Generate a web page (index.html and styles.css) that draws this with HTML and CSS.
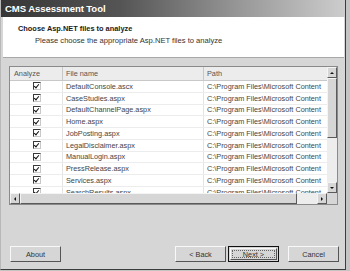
FILE: index.html
```html
<!DOCTYPE html>
<html lang="en">
<head>
  <meta charset="UTF-8">
  <title>CMS Assessment Tool</title>
  <link rel="stylesheet" href="styles.css">
</head>
<body>
  <div class="window">
    <div class="titlebar">CMS Assessment Tool</div>

    <div class="header">
      <div class="heading">Choose Asp.NET files to analyze</div>
      <div class="subheading">Please choose the appropriate Asp.NET files to analyze</div>
    </div>

    <div class="content">
      <div class="listview">
        <div class="lv-top">
          <div class="lv-table">
            <div class="lv-row lv-head">
              <div class="cell col-check">Analyze</div>
              <div class="cell col-name">File name</div>
              <div class="cell col-path">Path</div>
            </div>
            <div class="lv-row">
              <div class="cell col-check"><span class="checkbox"></span></div>
              <div class="cell col-name">DefaultConsole.ascx</div>
              <div class="cell col-path">C:\Program Files\Microsoft Content</div>
            </div>
            <div class="lv-row">
              <div class="cell col-check"><span class="checkbox"></span></div>
              <div class="cell col-name">CaseStudies.aspx</div>
              <div class="cell col-path">C:\Program Files\Microsoft Content</div>
            </div>
            <div class="lv-row">
              <div class="cell col-check"><span class="checkbox"></span></div>
              <div class="cell col-name">DefaultChannelPage.aspx</div>
              <div class="cell col-path">C:\Program Files\Microsoft Content</div>
            </div>
            <div class="lv-row">
              <div class="cell col-check"><span class="checkbox"></span></div>
              <div class="cell col-name">Home.aspx</div>
              <div class="cell col-path">C:\Program Files\Microsoft Content</div>
            </div>
            <div class="lv-row">
              <div class="cell col-check"><span class="checkbox"></span></div>
              <div class="cell col-name">JobPosting.aspx</div>
              <div class="cell col-path">C:\Program Files\Microsoft Content</div>
            </div>
            <div class="lv-row">
              <div class="cell col-check"><span class="checkbox"></span></div>
              <div class="cell col-name">LegalDisclaimer.aspx</div>
              <div class="cell col-path">C:\Program Files\Microsoft Content</div>
            </div>
            <div class="lv-row">
              <div class="cell col-check"><span class="checkbox"></span></div>
              <div class="cell col-name">ManualLogin.aspx</div>
              <div class="cell col-path">C:\Program Files\Microsoft Content</div>
            </div>
            <div class="lv-row">
              <div class="cell col-check"><span class="checkbox"></span></div>
              <div class="cell col-name">PressRelease.aspx</div>
              <div class="cell col-path">C:\Program Files\Microsoft Content</div>
            </div>
            <div class="lv-row">
              <div class="cell col-check"><span class="checkbox"></span></div>
              <div class="cell col-name">Services.aspx</div>
              <div class="cell col-path">C:\Program Files\Microsoft Content</div>
            </div>
            <div class="lv-row">
              <div class="cell col-check"><span class="checkbox"></span></div>
              <div class="cell col-name">SearchResults.aspx</div>
              <div class="cell col-path">C:\Program Files\Microsoft Content</div>
            </div>
          </div>

          <div class="vscroll">
            <div class="sb-btn"><span class="arrow-up"></span></div>
            <div class="sb-thumb-v"></div>
            <div class="sb-track"></div>
            <div class="sb-btn"><span class="arrow-down"></span></div>
          </div>
        </div>

        <div class="lv-bottom">
          <div class="hscroll">
            <div class="sb-btn"><span class="arrow-left"></span></div>
            <div class="sb-thumb-h"></div>
            <div class="sb-track"></div>
            <div class="sb-btn"><span class="arrow-right"></span></div>
          </div>
          <div class="sb-corner"></div>
        </div>
      </div>
    </div>

    <div class="footer">
      <button class="btn">About</button>
      <div class="spacer"></div>
      <button class="btn">&lt; Back</button>
      <button class="btn btn-default"><span>Next &gt;</span></button>
      <button class="btn btn-cancel">Cancel</button>
    </div>
  </div>
</body>
</html>
```

FILE: styles.css
```css
body {
  margin: 0;
  background-color: #c4c4c4;
  font-family: "Liberation Sans", Arial, sans-serif;
}
.window {
  width: 346px;
  height: 270px;
  box-sizing: border-box;
  background-color: #d6d6d6;
  border-left: 1px solid #b8b8b8;
  border-right: 1px solid #3c3c3c;
  border-bottom: 1px solid #3c3c3c;
  display: flex;
  flex-direction: column;
}
.titlebar {
  height: 17px;
  line-height: 17px;
  padding-left: 4px;
  color: white;
  font-size: 9.6px;
  font-weight: bold;
  letter-spacing: -0.1px;
  background: linear-gradient(to right, #363636 0%, #555 35%, #959595 68%, #cdcdcd 100%);
}
.header {
  height: 40px;
  margin: 0 1px 0 2px;
  background-color: white;
  border-bottom: 1px solid #a8a8a8;
}
.heading {
  font-size: 7.4px;
  font-weight: bold;
  color: #1a1a1a;
  padding: 7px 0 0 15px;
  line-height: 10px;
}
.subheading {
  font-size: 7.6px;
  color: #333;
  padding: 2px 0 0 32px;
  line-height: 10px;
}
.content {
  padding: 8px 0 0 8px;
}
.listview {
  width: 329px;
  height: 139px;
  box-sizing: border-box;
  border: 1px solid #8a8a8a;
  background-color: white;
  display: flex;
  flex-direction: column;
}
.lv-top {
  flex: 1;
  display: flex;
  overflow: hidden;
}
.lv-table {
  flex: 1;
  min-width: 0;
  overflow: hidden;
}
.lv-row {
  display: flex;
  height: 11.75px;
  box-sizing: border-box;
  border-bottom: 1px solid #ececec;
  font-size: 7.3px;
  color: #454545;
  white-space: nowrap;
}
.lv-head {
  height: 14px;
  background-color: #ececec;
  border-bottom: 1px solid #c8c8c8;
  color: #555;
}
.cell {
  display: flex;
  align-items: center;
  flex-shrink: 0;
  box-sizing: border-box;
  border-right: 1px solid #e4e4e4;
  padding-left: 3px;
  overflow: hidden;
}
.lv-head .cell {
  border-right: 1px solid #c8c8c8;
}
.col-check {
  width: 53px;
}
.lv-row .col-check {
  justify-content: center;
  padding-left: 0;
}
.lv-head .col-check {
  justify-content: flex-start;
  padding-left: 4px;
}
.col-name {
  width: 141px;
}
.col-path {
  width: 160px;
}
.checkbox {
  width: 8px;
  height: 8px;
  box-sizing: border-box;
  border: 1px solid #3a3a3a;
  border-right-color: #c8c8c8;
  border-bottom-color: #c8c8c8;
  background-color: white;
  position: relative;
  margin-left: 1px;
}
.checkbox::after {
  content: "";
  position: absolute;
  left: 1px;
  top: 0px;
  width: 2px;
  height: 4px;
  border-right: 1.5px solid #111;
  border-bottom: 1.5px solid #111;
  transform: rotate(40deg);
}
.vscroll {
  width: 10px;
  flex-shrink: 0;
  display: flex;
  flex-direction: column;
  background-color: #ededed;
}
.lv-bottom {
  height: 11px;
  display: flex;
}
.hscroll {
  flex: 1;
  display: flex;
  background-color: #ededed;
}
.sb-btn {
  width: 10px;
  height: 11px;
  box-sizing: border-box;
  background-color: #d6d6d6;
  border: 1px solid;
  border-color: #f4f4f4 #5a5a5a #5a5a5a #f4f4f4;
  display: flex;
  align-items: center;
  justify-content: center;
  flex-shrink: 0;
}
.sb-thumb-v {
  height: 60px;
  box-sizing: border-box;
  background-color: #d6d6d6;
  border: 1px solid;
  border-color: #f4f4f4 #5a5a5a #5a5a5a #f4f4f4;
}
.sb-thumb-h {
  width: 277px;
  box-sizing: border-box;
  background-color: #d6d6d6;
  border: 1px solid;
  border-color: #f4f4f4 #5a5a5a #5a5a5a #f4f4f4;
}
.sb-track {
  flex: 1;
}
.sb-corner {
  width: 10px;
  background-color: #d6d6d6;
}
.arrow-up, .arrow-down, .arrow-left, .arrow-right {
  width: 0;
  height: 0;
  border: 2.5px solid transparent;
}
.arrow-up {
  border-bottom-color: #111;
  border-top-width: 0;
}
.arrow-down {
  border-top-color: #111;
  border-bottom-width: 0;
}
.arrow-left {
  border-right-color: #111;
  border-left-width: 0;
}
.arrow-right {
  border-left-color: #111;
  border-right-width: 0;
}
.footer {
  display: flex;
  align-items: center;
  padding: 41px 0 0 9px;
}
.spacer {
  flex: 1;
}
.btn {
  width: 51px;
  height: 16px;
  margin: 0;
  padding: 0;
  box-sizing: border-box;
  font-family: "Liberation Sans", Arial, sans-serif;
  font-size: 7.3px;
  color: #333;
  background-color: #d6d6d6;
  border: 1px solid;
  border-color: #f8f8f8 #555 #555 #f8f8f8;
}
.btn-default {
  margin-left: 2px;
  border: 1px solid #111;
  display: flex;
  align-items: center;
  justify-content: center;
  padding: 1px;
}
.btn-default span {
  width: 100%;
  height: 100%;
  box-sizing: border-box;
  border: 1px solid;
  border-color: #f8f8f8 #555 #555 #f8f8f8;
  outline: 1px dotted #666;
  outline-offset: -3px;
  display: flex;
  align-items: center;
  justify-content: center;
}
.btn-cancel {
  margin-left: 9px;
  margin-right: 6px;
}
```
